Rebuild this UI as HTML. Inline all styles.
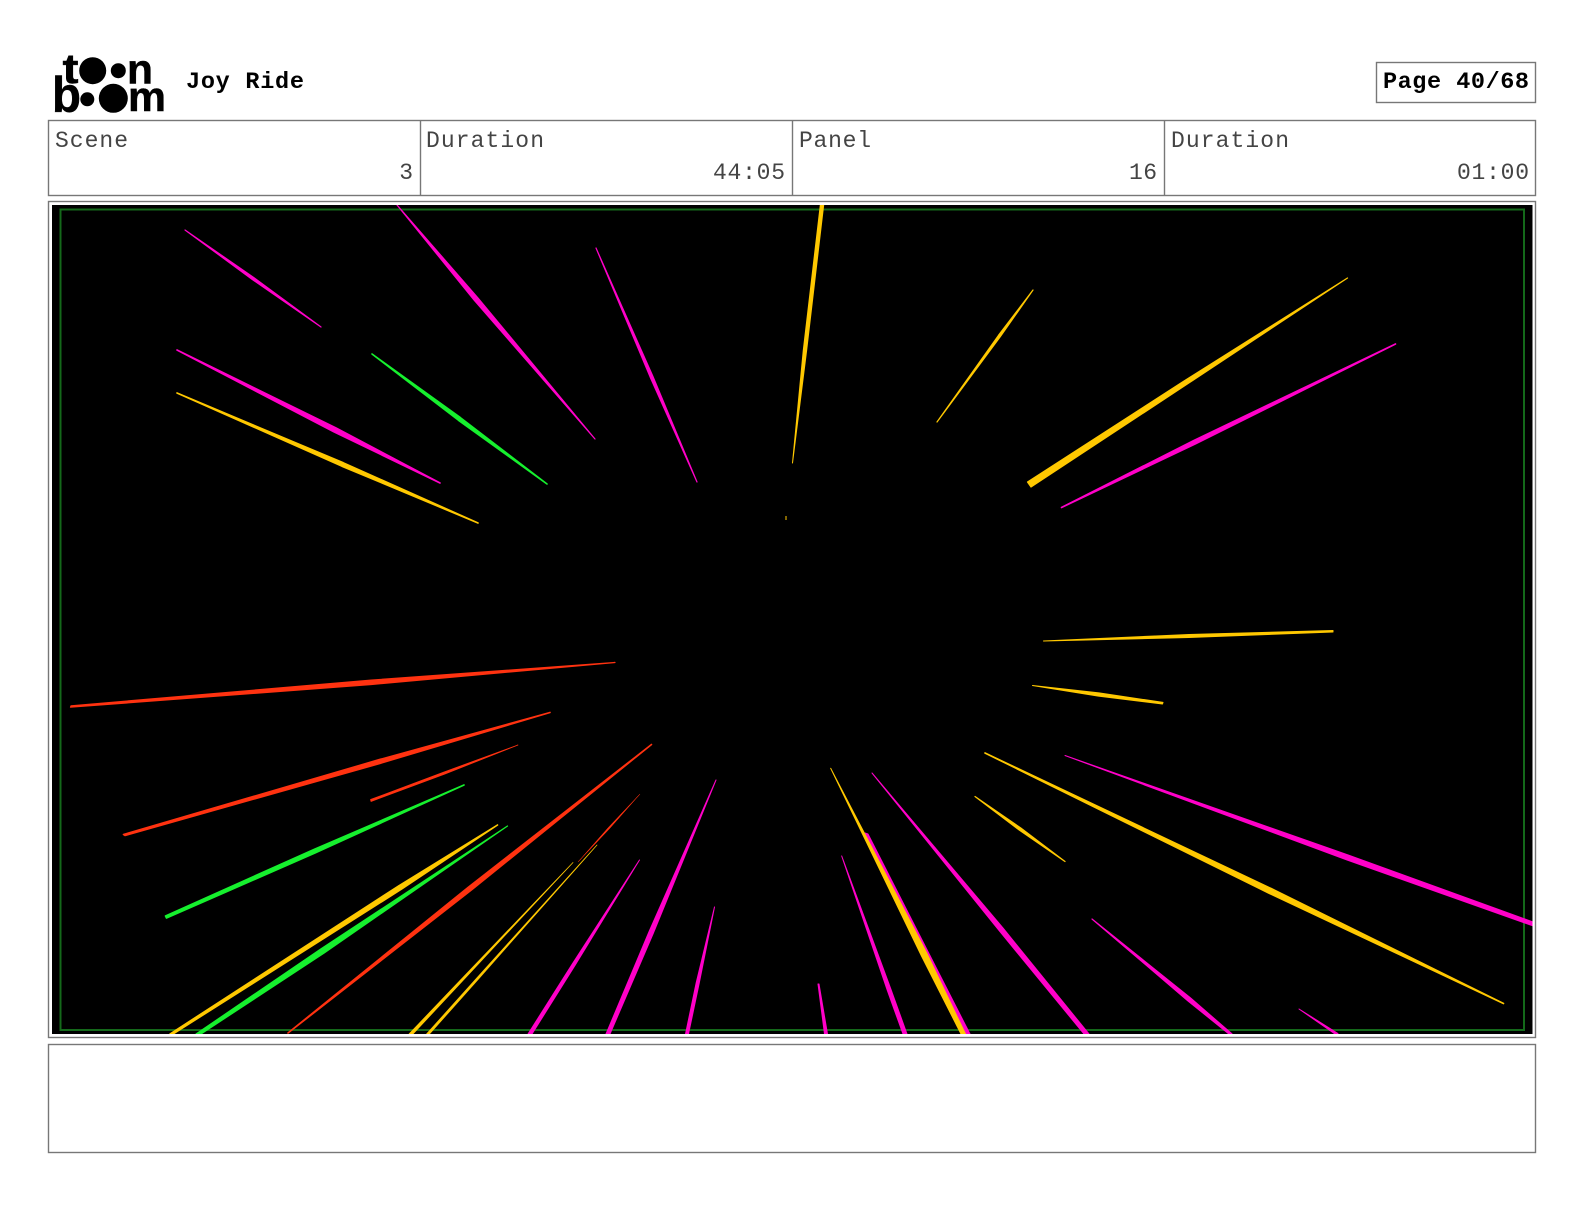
<!DOCTYPE html>
<html lang="en">
<head>
<meta charset="utf-8">
<title>Joy Ride - Page 40/68</title>
<style>
html,body{margin:0;padding:0;background:#fff;width:1584px;height:1224px;overflow:hidden}
svg{display:block}
.lab{font-family:"Liberation Mono",monospace;font-size:23px;fill:#444;font-weight:400}
.ttl{font-family:"Liberation Mono",monospace;font-size:23.5px;font-weight:700;fill:#000}
.lg{font-family:"Liberation Sans",sans-serif;font-weight:700;fill:#000;stroke:#000;stroke-width:.5}
polygon{stroke-width:1.6;stroke-linejoin:round}
.m{fill:#ff00c8;stroke:#ff00c8}.y{fill:#ffc800;stroke:#ffc800}.g{fill:#16f02e;stroke:#16f02e}.r{fill:#ff3210;stroke:#ff3210}
</style>
</head>
<body>
<svg xmlns="http://www.w3.org/2000/svg" width="1584" height="1224" viewBox="0 0 1584 1224">
<defs><clipPath id="c"><rect x="52" y="205" width="1480.5" height="829"/></clipPath></defs>

<!-- logo -->
<text class="lg" x="62.5" y="83" font-size="42" textLength="16" lengthAdjust="spacingAndGlyphs">t</text>
<circle cx="92.7" cy="70.7" r="13.5"/>
<circle cx="118.3" cy="70.7" r="7.5"/>
<text class="lg" x="127" y="83.5" font-size="42" textLength="26" lengthAdjust="spacingAndGlyphs">n</text>
<text class="lg" x="52" y="112" font-size="50" textLength="29" lengthAdjust="spacingAndGlyphs">b</text>
<circle cx="87.3" cy="99.3" r="7"/>
<circle cx="113.3" cy="98.3" r="14.5"/>
<text class="lg" x="128" y="111" font-size="42" textLength="38" lengthAdjust="spacingAndGlyphs">m</text>

<!-- title and page -->
<text class="ttl" x="186" y="88" textLength="118">Joy Ride</text>
<rect x="1376.5" y="62.5" width="159" height="40" fill="#fff" stroke="#777" stroke-width="1.4"/>
<text class="ttl" x="1383" y="88" textLength="146">Page 40/68</text>

<!-- info table -->
<rect x="48.5" y="120.5" width="1487" height="75" fill="#fff" stroke="#777" stroke-width="1.4"/>
<path d="M420.5 120V195M792.5 120V195M1164.5 120V195" stroke="#777" stroke-width="1.4" fill="none"/>
<text class="lab" x="55" y="147" textLength="73">Scene</text>
<text class="lab" x="426" y="147" textLength="118">Duration</text>
<text class="lab" x="799" y="147" textLength="72">Panel</text>
<text class="lab" x="1171" y="147" textLength="118">Duration</text>
<text class="lab" x="413" y="179" text-anchor="end">3</text>
<text class="lab" x="785" y="179" text-anchor="end" textLength="72">44:05</text>
<text class="lab" x="1157" y="179" text-anchor="end" textLength="28">16</text>
<text class="lab" x="1529" y="179" text-anchor="end" textLength="72">01:00</text>

<!-- panel frame -->
<rect x="48.5" y="201.5" width="1487" height="836" fill="#fff" stroke="#777" stroke-width="1.4"/>
<rect x="52" y="205" width="1480.5" height="829" fill="#000"/>
<rect x="60.5" y="209.5" width="1463.5" height="820.5" fill="none" stroke="#14691a" stroke-width="2"/>

<g clip-path="url(#c)">
<polygon class="m" points="185,230 253.7,277.5 321,327 252.3,279.5" style="stroke-width:1.2"/>
<polygon class="m" points="397,205 477.7,297.6 595,439 474.3,300.4" style="stroke-width:1.2"/>
<polygon class="m" points="596,248 652.8,376.1 697,482 650.2,377.2" style="stroke-width:1.2"/>
<polygon class="m" points="177,350 335.8,427.8 440,483 333.8,431.8"/>
<polygon class="y" points="177,393 343.3,462.8 478,523 341.9,466.2"/>
<polygon class="g" points="372,354 460.5,417.7 547,484 458.5,420.3"/>
<polygon class="y" points="820.3,205 823.7,205 806.7,350 792.5,463 803.3,350" style="stroke-width:1"/>
<polygon class="y" points="1033,290 1000.3,336.7 937,422 998.5,335.3" style="stroke-width:1.2"/>
<polygon class="y" points="1347.5,278 1189.2,382.8 1031,487 1027.5,482 1186.8,379.2" style="stroke-width:1.2"/>
<polygon class="m" points="1395.5,344 1195.85,443.7 1061.5,507.5 1194.15,440.3"/>
<polygon class="y" points="1333,630.5 1333,632 1189,637.5 1043.5,641 1189,634.5" style="stroke-width:1"/>
<polygon class="y" points="1032.5,685.5 1099,692.9 1163,702.4 1162.5,704 1098.4,696.1" style="stroke-width:1"/>
<polygon class="y" points="985,753 1271.1,888.5 1503.5,1003.5 1268.9,893.1"/>
<polygon class="m" points="1065,755.5 1348.5,855.1 1536,923 1536,927 1346.7,859.9" style="stroke-width:1"/>
<polygon class="y" points="975,796.5 1020.8,828 1065,861.5 1019.2,830" style="stroke-width:1.2"/>
<polygon class="m" points="1092,919 1190.5,998 1232,1034 1229,1034 1188.1,1001" style="stroke-width:1.2"/>
<polygon class="m" points="1299,1009 1338,1033.5 1335,1034" style="stroke-width:1"/>
<polygon class="m" points="872,773 1003.1,928.1 1089,1034 1084,1034 999.5,931.1" style="stroke-width:1"/>
<polygon class="r" points="615,662.5 371.2,680.1 71,705.8 70.5,707.2 371.4,684.5" style="stroke-width:1.2"/>
<polygon class="r" points="550,712.5 380.2,763.3 125,835.5 123.5,834.5 379,759.7"/>
<polygon class="r" points="518,745 444.9,774.1 371,801.5 370.5,799.5 444.1,771.9" style="stroke-width:.7"/>
<polygon class="g" points="464,785 315.8,852.7 166.5,918 165.5,916 314.2,849.3"/>
<polygon class="g" points="507.5,826 324.2,953 201,1034 196,1034 321.3,948.6" style="stroke-width:1.2"/>
<polygon class="y" points="497.5,825 400.9,889.5 173,1034 170,1034 398.7,885.9"/>
<polygon class="r" points="651.5,744.5 471,890.3 288,1033 468.5,887.1"/>
<polygon class="r" points="640,794 609.6,828.5 578,862 608.4,827.5" style="stroke-width:.5"/>
<polygon class="y" points="597,845 479.4,978 429.5,1034 426.5,1034 478,976.6" style="stroke-width:.7"/>
<polygon class="y" points="573,862.5 460.4,983.3 413,1034 409,1034 458.8,981.7" style="stroke-width:.7"/>
<polygon class="m" points="639.5,860 575.1,965.2 532,1034 528,1034 572.5,963.6" style="stroke-width:1"/>
<polygon class="m" points="716,780 653.3,933.3 610,1034 606,1034 649.1,931.5" style="stroke-width:1"/>
<polygon class="m" points="714.5,907 699.2,983.3 688.5,1034 685.5,1034 696.2,982.7" style="stroke-width:1"/>
<polygon class="m" points="865,833 868,834 970,1034 966,1034" style="stroke-width:1"/>
<polygon class="y" points="830.7,768.3 926.7,953 965.5,1034 961,1034 921.3,955.6" style="stroke-width:1"/>
<polygon class="m" points="841.7,856 890.8,988.9 907,1034 903,1034 887.2,990.1" style="stroke-width:1"/>
<polygon class="m" points="818,984 819,984 827.5,1034 824.5,1034" style="stroke-width:1"/>
<rect x="785.5" y="516" width="1" height="4" fill="#ffc800"/>
</g>

<!-- caption box -->
<rect x="48.5" y="1044.5" width="1487" height="108" fill="#fff" stroke="#777" stroke-width="1.4"/>
</svg>
</body>
</html>
